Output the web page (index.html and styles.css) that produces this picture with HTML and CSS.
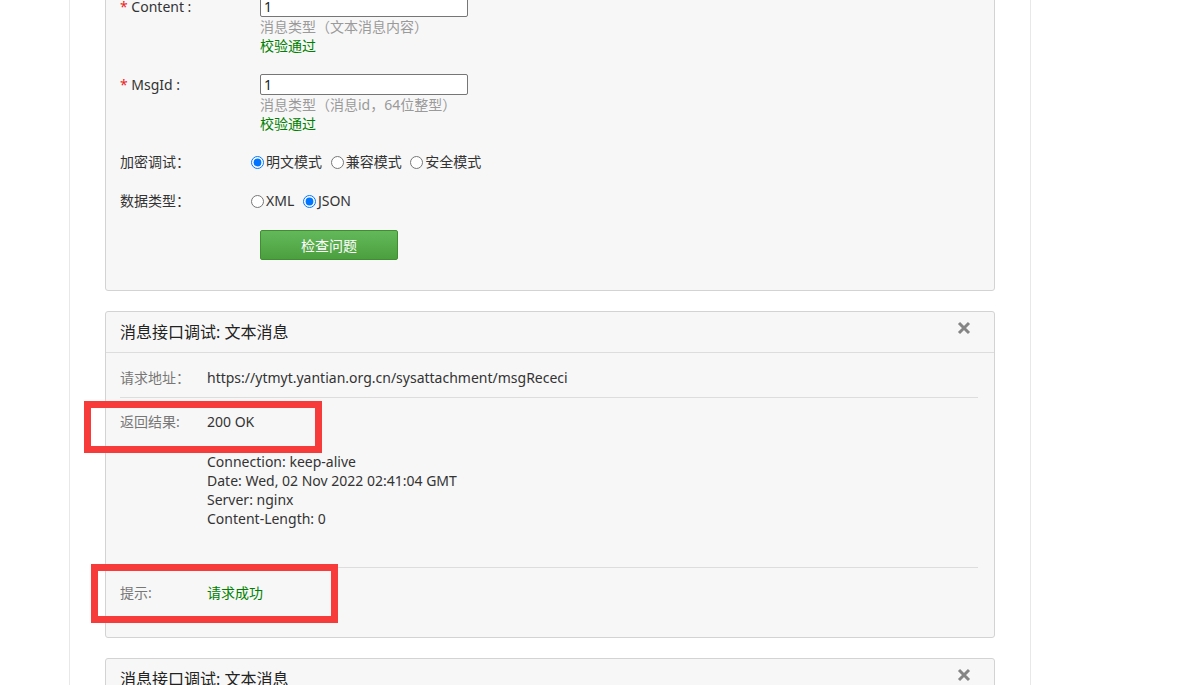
FILE: index.html
```html
<!DOCTYPE html>
<html>
<head>
  <title>消息接口调试</title>
  <meta charset="utf-8">
  <link rel="stylesheet" href="styles.css">
</head>
<body>
  <div class="page">
    <div class="panel form-panel">
      <div class="form-row">
        <div class="form-label"><span class="req">*</span> Content :</div>
        <div class="form-field">
          <input type="text" class="text-input" value="1">
          <div class="hint">消息类型（文本消息内容）</div>
          <div class="valid">校验通过</div>
        </div>
      </div>
      <div class="form-row">
        <div class="form-label"><span class="req">*</span> MsgId :</div>
        <div class="form-field">
          <input type="text" class="text-input" value="1">
          <div class="hint">消息类型（消息id，64位整型）</div>
          <div class="valid">校验通过</div>
        </div>
      </div>
      <div class="form-row option-row">
        <div class="form-label">加密调试：</div>
        <div class="radios">
          <label><input type="radio" name="enc" checked>明文模式</label>
          <label><input type="radio" name="enc">兼容模式</label>
          <label><input type="radio" name="enc">安全模式</label>
        </div>
      </div>
      <div class="form-row option-row">
        <div class="form-label">数据类型：</div>
        <div class="radios">
          <label><input type="radio" name="fmt">XML</label>
          <label><input type="radio" name="fmt" checked>JSON</label>
        </div>
      </div>
      <div class="form-row">
        <div class="form-label"></div>
        <button class="btn-check">检查问题</button>
      </div>
    </div>

    <div class="panel">
      <div class="panel-heading">
        消息接口调试: 文本消息
        <span class="close"><svg width="14" height="14" viewBox="0 0 14 14"><path d="M2 2L12 12M12 2L2 12" stroke="#858585" stroke-width="3"/></svg></span>
      </div>
      <div class="panel-body">
        <div class="result-row first">
          <div class="result-label">请求地址：</div>
          <div class="result-value">https://ytmyt.yantian.org.cn/sysattachment/msgRececi</div>
        </div>
        <div class="result-row response">
          <div class="result-label">返回结果:</div>
          <div class="result-value">
            <div>200 OK</div>
            <div class="headers">
              <div>Connection: keep-alive</div>
              <div>Date: Wed, 02 Nov 2022 02:41:04 GMT</div>
              <div>Server: nginx</div>
              <div>Content-Length: 0</div>
            </div>
          </div>
        </div>
        <div class="result-row last">
          <div class="result-label">提示:</div>
          <div class="result-value ok">请求成功</div>
        </div>
      </div>
    </div>

    <div class="panel">
      <div class="panel-heading">
        消息接口调试: 文本消息
        <span class="close"><svg width="14" height="14" viewBox="0 0 14 14"><path d="M2 2L12 12M12 2L2 12" stroke="#858585" stroke-width="3"/></svg></span>
      </div>
      <div class="panel-body">
        <div class="result-row first">
          <div class="result-label">请求地址：</div>
          <div class="result-value">https://ytmyt.yantian.org.cn/sysattachment/msgRececi</div>
        </div>
      </div>
    </div>
  </div>

  <!-- annotation boxes drawn over the screenshot -->
  <div class="mark mark-result"></div>
  <div class="mark mark-tip"></div>
</body>
</html>
```

FILE: styles.css
```css
body {
  margin: 0;
  padding: 0;
  background-color: #ffffff;
  font-family: "Noto Sans", "Noto Sans CJK SC", sans-serif;
  font-size: 14px;
  color: #333333;
}

.page {
  width: 890px;
  margin: -25px 0 0 69px; /* page is scrolled down a bit */
  padding: 0 35px;
  border-left: 1px solid #e8e8e8;
  border-right: 1px solid #e8e8e8;
}

.panel {
  background-color: #f7f7f7;
  border: 1px solid #d3d3d3;
  border-radius: 3px;
  margin-bottom: 20px;
}

.form-panel {
  padding: 20px 14px 30px;
}

.form-row {
  display: flex;
  margin-bottom: 19px;
}

.form-row:last-child {
  margin-bottom: 0;
}

.form-label {
  width: 140px;
  flex-shrink: 0;
  line-height: 21px;
}

.option-row .form-label {
  line-height: 20px;
}

.req {
  color: #ee2222;
}

.text-input {
  display: block;
  width: 208px;
  height: 21px;
  box-sizing: border-box;
  margin: 0;
  padding: 0 3px;
  border: 1px solid #767676;
  border-radius: 2px;
  background-color: #ffffff;
  font-family: inherit;
  font-size: 14px;
  color: #222222;
}

.hint {
  line-height: 19px;
  color: #9a9a9a;
}

.valid {
  line-height: 19px;
  color: #008000;
}

.radios {
  margin-left: -14px;
  line-height: 20px;
}

.radios input {
  margin: 0 2px 0 5px;
  vertical-align: -2px;
}

.btn-check {
  width: 138px;
  height: 30px;
  margin: 0;
  padding: 0;
  border: 1px solid #3f8f31;
  border-radius: 2px;
  background-image: linear-gradient(to bottom, #63b95a, #4c9f3e);
  color: #ffffff;
  font-family: inherit;
  font-size: 14px;
  cursor: pointer;
}

.panel-heading {
  display: flex;
  justify-content: space-between;
  padding: 10px 23px 10px 14px;
  border-bottom: 1px solid #dddddd;
  font-size: 16px;
  line-height: 20px;
  color: #222222;
}

.close {
  display: block;
  height: 14px;
  margin-top: -3px;
  cursor: pointer;
}

.panel-body {
  padding: 0 16px 0 14px;
}

.result-row {
  display: flex;
  line-height: 20px;
}

.result-row.first {
  padding: 15px 0 9px;
  border-bottom: 1px solid #dddddd;
}

.result-row.response {
  padding: 14px 0 39px;
  border-bottom: 1px solid #dddddd;
}

.result-row.last {
  padding: 15px 0 34px;
}

.result-label {
  width: 87px;
  flex-shrink: 0;
  color: #777777;
}

.result-value.ok {
  color: #008000;
}

.headers {
  margin-top: 20px;
  line-height: 19px;
}

.mark {
  position: absolute;
  box-sizing: border-box;
  border: 7px solid #f73b3b;
}

.mark-result {
  left: 84px;
  top: 401px;
  width: 238px;
  height: 52px;
}

.mark-tip {
  left: 91px;
  top: 564px;
  width: 247px;
  height: 59px;
}
```
